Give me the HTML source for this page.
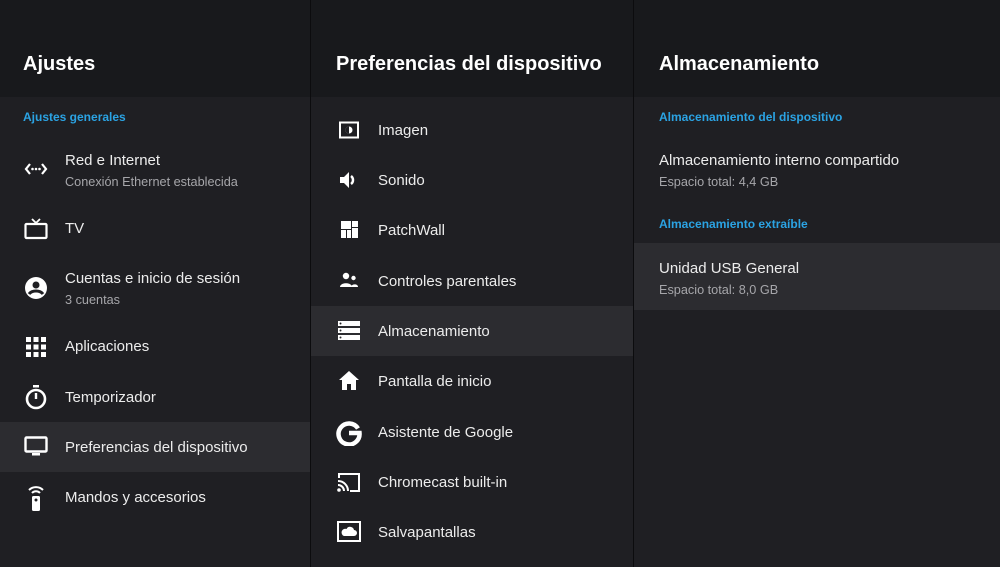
<!DOCTYPE html><html><head><meta charset="utf-8"><style>
*{margin:0;padding:0;box-sizing:border-box}
body{width:1000px;height:567px;background:#1e1e22;font-family:"Liberation Sans",sans-serif;color:#ececec;position:relative;overflow:hidden}
.p{position:absolute;top:0;height:567px;background:#1f1f23}
.h{position:absolute;top:0;left:0;right:0;height:97px;background:#18191c}
.t{position:absolute;font-weight:bold;font-size:20px;color:#fff;top:53px}
.a{position:absolute;font-size:15px;line-height:18px;margin-top:-8px;white-space:nowrap}
.s{position:absolute;font-size:12.7px;line-height:16px;margin-top:-7px;color:#a6a6aa;white-space:nowrap}
.sec{position:absolute;font-size:12px;font-weight:bold;color:#2ba3e3;line-height:16px;margin-top:-7px}
.hl{position:absolute;left:0;right:0;background:#2c2c30}
svg{position:absolute}
</style></head><body>
<div class="p" style="left:0;width:310px"><div class="h"></div>
<div class="hl" style="top:422px;height:50px"></div>
<div class="t" style="left:23px">Ajustes</div>
<div class="sec" style="left:23px;top:116px">Ajustes generales</div>
<div class="a" style="left:65px;top:160px">Red e Internet</div>
<div class="s" style="left:65px;top:181px">Conexión Ethernet establecida</div>
<div class="a" style="left:65px;top:228px">TV</div>
<div class="a" style="left:65px;top:278px">Cuentas e inicio de sesión</div>
<div class="s" style="left:65px;top:299px">3 cuentas</div>
<div class="a" style="left:65px;top:346px">Aplicaciones</div>
<div class="a" style="left:65px;top:397px">Temporizador</div>
<div class="a" style="left:65px;top:447px">Preferencias del dispositivo</div>
<div class="a" style="left:65px;top:497px">Mandos y accesorios</div>
<svg style="left:24px;top:160px" width="24" height="18" viewBox="0 0 24 18"><path d="M6 4L2 9l4 5M18 4l4 5-4 5" stroke="#fff" stroke-width="2.2" fill="none"/><circle cx="8.5" cy="9" r="1.3" fill="#fff"/><circle cx="12" cy="9" r="1.3" fill="#fff"/><circle cx="15.5" cy="9" r="1.3" fill="#fff"/></svg>
<svg style="left:24px;top:217px" width="24" height="24" viewBox="0 0 24 24"><path d="M8 2l4 4 4-4" stroke="#fff" stroke-width="1.8" fill="none"/><rect x="1.5" y="7" width="21" height="14" rx="1" stroke="#fff" stroke-width="2.2" fill="none"/></svg>
<svg style="left:24px;top:276px" width="24" height="24" viewBox="0 0 24 24"><circle cx="12" cy="12" r="11" fill="#fff"/><circle cx="12" cy="9" r="3.5" fill="#1f1f23"/><path d="M5 18c3-4 11-4 14 0" stroke="#1f1f23" stroke-width="3" fill="none"/></svg>
<svg style="left:26px;top:337px" width="20" height="20" viewBox="0 0 20 20" fill="#fff"><rect x="0" y="0" width="5" height="5"/><rect x="7.5" y="0" width="5" height="5"/><rect x="15" y="0" width="5" height="5"/><rect x="0" y="7.5" width="5" height="5"/><rect x="7.5" y="7.5" width="5" height="5"/><rect x="15" y="7.5" width="5" height="5"/><rect x="0" y="15" width="5" height="5"/><rect x="7.5" y="15" width="5" height="5"/><rect x="15" y="15" width="5" height="5"/></svg>
<svg style="left:24px;top:384px" width="24" height="26" viewBox="0 0 24 26"><rect x="9" y="1" width="6" height="2.5" fill="#fff"/><circle cx="12" cy="15" r="9" stroke="#fff" stroke-width="2.6" fill="none"/><path d="M12 15V9" stroke="#fff" stroke-width="2.4"/></svg>
<svg style="left:24px;top:436px" width="24" height="22" viewBox="0 0 24 22"><rect x="1.5" y="1.5" width="21" height="14" rx="1" stroke="#fff" stroke-width="2.4" fill="none"/><rect x="8" y="17" width="8" height="2.5" fill="#fff"/></svg>
<svg style="left:26px;top:484px" width="20" height="28" viewBox="0 0 20 28"><path d="M3 6a10 10 0 0 1 14 0M6 9a5.5 5.5 0 0 1 8 0" stroke="#fff" stroke-width="2" fill="none"/><rect x="6" y="12" width="8" height="15" rx="1.5" fill="#fff"/><circle cx="10" cy="16" r="1.5" fill="#1f1f23"/></svg>
</div>
<div style="position:absolute;left:310px;top:0;width:1px;height:567px;background:#0c0c0e"></div>
<div class="p" style="left:311px;width:322px"><div class="h"></div>
<div class="hl" style="top:306px;height:50px"></div>
<div class="t" style="left:25px">Preferencias del dispositivo</div>
<div class="a" style="left:67px;top:130px">Imagen</div>
<div class="a" style="left:67px;top:180px">Sonido</div>
<div class="a" style="left:67px;top:230px">PatchWall</div>
<div class="a" style="left:67px;top:281px">Controles parentales</div>
<div class="a" style="left:67px;top:331px">Almacenamiento</div>
<div class="a" style="left:67px;top:381px">Pantalla de inicio</div>
<div class="a" style="left:67px;top:432px">Asistente de Google</div>
<div class="a" style="left:67px;top:482px">Chromecast built-in</div>
<div class="a" style="left:67px;top:532px">Salvapantallas</div>
<svg style="left:28px;top:121px" width="20" height="18" viewBox="0 0 20 18"><rect x="1" y="1.5" width="18" height="15" stroke="#fff" stroke-width="2" fill="none"/><circle cx="10" cy="9" r="3.5" fill="#fff"/><path d="M10 5.5a3.5 3.5 0 0 0 0 7z" fill="#1f1f23"/></svg>
<svg style="left:28px;top:170px" width="20" height="20" viewBox="0 0 20 20"><path d="M1 7h4l5-5v16l-5-5H1z" fill="#fff"/><path d="M12 6a5 5 0 0 1 0 8" stroke="#fff" stroke-width="2.5" fill="none"/></svg>
<svg style="left:30px;top:221px" width="17" height="17" viewBox="0 0 17 17" fill="#fff"><rect x="0" y="0" width="10" height="8"/><rect x="11" y="0" width="6" height="6"/><rect x="11" y="7" width="6" height="10"/><rect x="0" y="9" width="5" height="8"/><rect x="6" y="9" width="4" height="8"/></svg>
<svg style="left:29px;top:272px" width="18" height="16" viewBox="0 0 18 16" fill="#fff"><circle cx="6" cy="4" r="3.2"/><path d="M0 15c0-5 12-5 12 0z"/><circle cx="13.5" cy="6" r="2.2"/><path d="M11 15c0-3 7-4 7 0z"/></svg>
<svg style="left:27px;top:321px" width="22" height="20" viewBox="0 0 22 20" fill="#fff"><rect x="0" y="0" width="22" height="5"/><rect x="0" y="7" width="22" height="5"/><rect x="0" y="14" width="22" height="5"/><circle cx="2.5" cy="2.5" r="1" fill="#1f1f23"/><circle cx="2.5" cy="9.5" r="1" fill="#2c2c30"/><circle cx="2.5" cy="16.5" r="1" fill="#2c2c30"/></svg>
<svg style="left:28px;top:371px" width="20" height="19" viewBox="0 0 20 19"><path d="M10 0L0 9h3v10h5v-6h4v6h5V9h3z" fill="#fff"/></svg>
<svg style="left:25px;top:420px" width="26" height="26" viewBox="0 0 26 26"><path d="M22 8.5A10.5 10.5 0 1 0 23.5 13H13" stroke="#fff" stroke-width="4.5" fill="none"/></svg>
<svg style="left:26px;top:472px" width="24" height="21" viewBox="0 0 24 21"><path d="M2 6V2h20v17h-9" stroke="#fff" stroke-width="2" fill="none"/><path d="M1 9a10 10 0 0 1 10 10M1 13a6 6 0 0 1 6 6" stroke="#fff" stroke-width="2" fill="none"/><circle cx="2" cy="18" r="1.8" fill="#fff"/></svg>
<svg style="left:26px;top:521px" width="24" height="21" viewBox="0 0 24 21"><rect x="1" y="1" width="22" height="19" stroke="#fff" stroke-width="2" fill="none"/><path d="M7 15h10a3 3 0 0 0 0-6 4 4 0 0 0-7.5-1A3.5 3.5 0 0 0 7 15z" fill="#fff"/></svg>
</div>
<div style="position:absolute;left:633px;top:0;width:1px;height:567px;background:#0c0c0e"></div>
<div class="p" style="left:634px;width:366px"><div class="h"></div>
<div class="hl" style="top:243px;height:67px"></div>
<div class="t" style="left:25px">Almacenamiento</div>
<div class="sec" style="left:25px;top:116px">Almacenamiento del dispositivo</div>
<div class="a" style="left:25px;top:160px">Almacenamiento interno compartido</div>
<div class="s" style="left:25px;top:181px">Espacio total: 4,4 GB</div>
<div class="sec" style="left:25px;top:223px">Almacenamiento extraíble</div>
<div class="a" style="left:25px;top:268px">Unidad USB General</div>
<div class="s" style="left:25px;top:289px">Espacio total: 8,0 GB</div>
</div>
</body></html>
